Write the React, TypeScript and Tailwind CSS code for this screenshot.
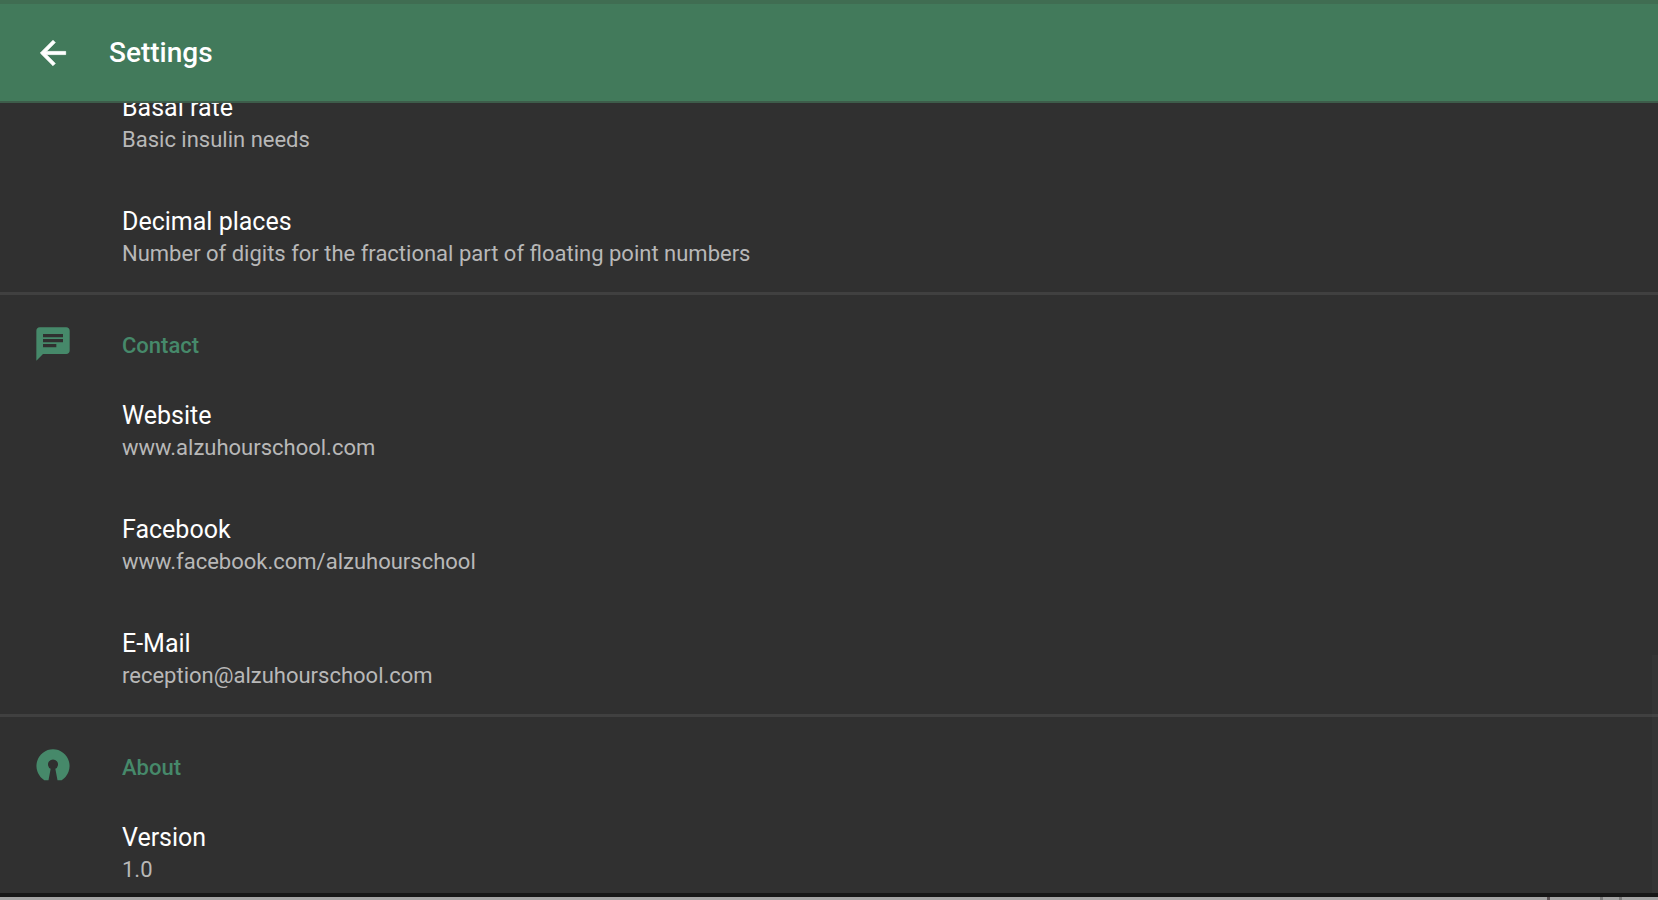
import React from "react";
import {MdChat} from "react-icons/md";

type Item = {
 title: string;
 summary: string;
 href?: string;
};

const insulinItems: Item[] = [
 {title: "Basal rate", summary: "Basic insulin needs"},
 {title: "Decimal places", summary: "Number of digits for the fractional part of floating point numbers"},
];

const contactItems: Item[] = [
 {title: "Website", summary: "www.alzuhourschool.com", href: "#website"},
 {title: "Facebook", summary: "www.facebook.com/alzuhourschool", href: "#facebook"},
 {title: "E-Mail", summary: "reception@alzuhourschool.com", href: "#email"},
];

const aboutItems: Item[] = [{title: "Version", summary: "1.0"}];

const BackIcon: React.FC = () => (
 <svg viewBox="0 0 24 24" className="h-[38px] w-[38px]" fill="currentColor" stroke="currentColor" strokeWidth="0.5" aria-hidden="true">
  <path d="M20 11H7.83l5.59-5.59L12 4l-8 8 8 8 1.41-1.41L7.83 13H20v-2z" />
 </svg>
);

const OpenSourceIcon: React.FC = () => (
 <svg viewBox="0 0 24 24" className="h-10 w-10" fill="currentColor" aria-hidden="true">
  <path d="M12 2A10 10 0 0 0 6.8 20.5L9.3 20.5L10.6 13.7A3 3 0 1 1 13.4 13.7L14.7 20.5L17.2 20.5A10 10 0 0 0 12 2Z" />
 </svg>
);

const SettingsItem: React.FC<{item: Item}> = ({item}) => {
 const className = "block w-full pt-7 pb-[22px] pr-6 pl-[122px] text-left";
 const content = (
  <>
   <span className="block text-[25px] leading-8 text-white">{item.title}</span>
   <span className="block text-[22px] leading-8 text-[#b8b8b8]">{item.summary}</span>
  </>
 );

 return (
  <li>
   {item.href ? (
    <a href={item.href} className={className}>
     {content}
    </a>
   ) : (
    <button type="button" className={className}>
     {content}
    </button>
   )}
  </li>
 );
};

const SettingsSection: React.FC<{
 title?: string;
 icon?: React.ReactNode;
 items: Item[];
}> = ({title, icon, items}) => (
 <section className={title ? "border-t-3 border-[#404040]" : ""}>
  {title && (
   <div className="flex items-start pt-[29px] pb-2 pl-[33px] text-[#46896a]">
    <div className="w-[89px]">{icon}</div>
    <h2 className="pt-1 text-[22px] leading-9 font-medium">{title}</h2>
   </div>
  )}
  <ul>
   {items.map((item) => (
    <SettingsItem key={item.title} item={item} />
   ))}
  </ul>
 </section>
);

const App: React.FC = () => {
 return (
  <div className="flex h-screen flex-col bg-[#303030] font-['Roboto',sans-serif]">
   <header className="flex h-[103px] shrink-0 items-center border-t-4 border-b-2 border-t-[#406d52] border-b-[#3d5c4a] bg-[#427a5b] pl-[34px] text-white">
    <button type="button" aria-label="Back" className="mr-[37px]">
     <BackIcon />
    </button>
    <h1 className="text-[28px] leading-9 font-medium">Settings</h1>
   </header>
   <main className="relative flex-1 overflow-hidden">
    {/* list is scrolled, first row slides under the app bar */}
    <div className="-mt-[39px]">
     <SettingsSection items={insulinItems} />
     <SettingsSection title="Contact" icon={<MdChat className="h-10 w-10" />} items={contactItems} />
     <SettingsSection title="About" icon={<OpenSourceIcon />} items={aboutItems} />
    </div>
    {/* scrollbar thumb */}
    <div className="absolute right-0 bottom-0 h-[238px] w-[6px] bg-white/2" />
   </main>
   <footer className="flex h-[7px] shrink-0 justify-end border-t-4 border-[#161616] bg-[#a3a3a3] pr-9">
    <div className="mr-[50px] w-[3px] bg-[#5c5456]" />
    <div className="mr-4 w-[3px] bg-[#7c7c7c]" />
    <div className="w-[3px] bg-[#7c7c7c]" />
   </footer>
  </div>
 );
};

export default App;
